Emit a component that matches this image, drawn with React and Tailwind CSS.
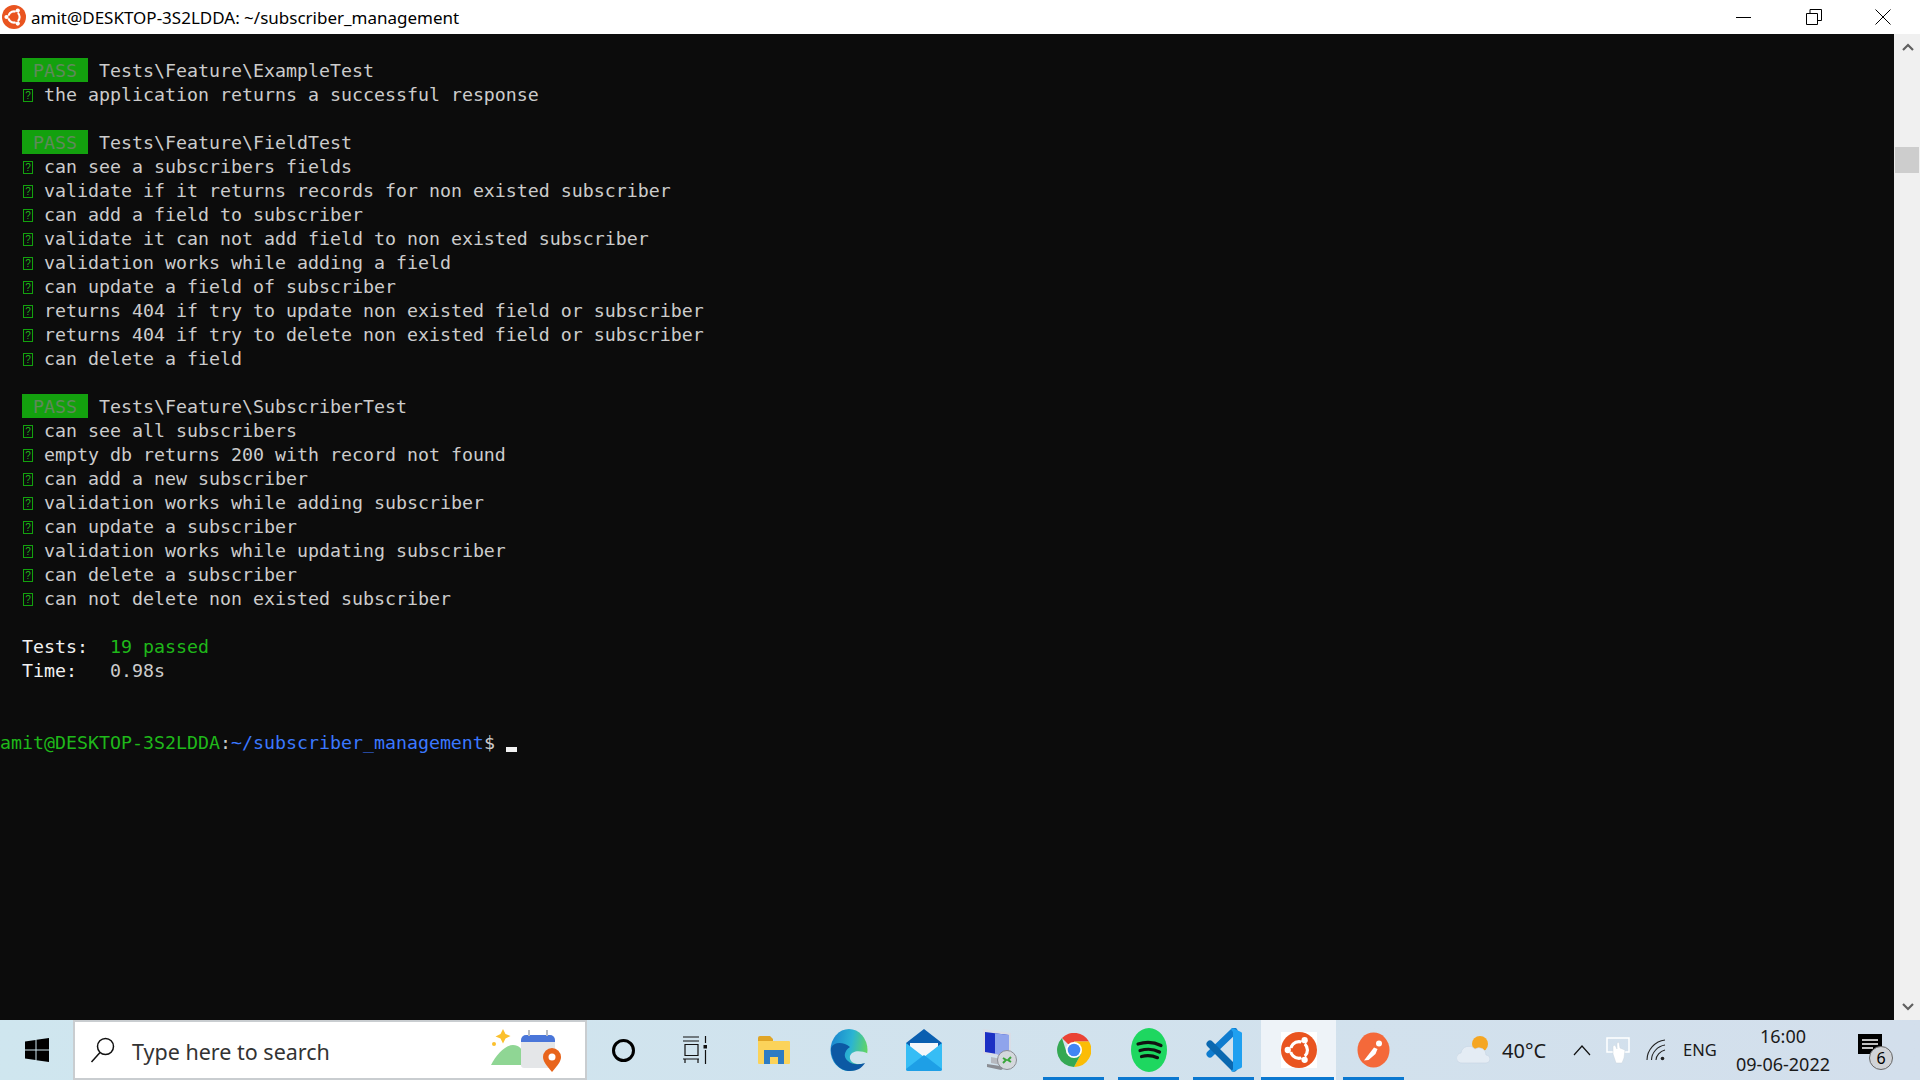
const fieldTests = [
  'can see a subscribers fields',
  'validate if it returns records for non existed subscriber',
  'can add a field to subscriber',
  'validate it can not add field to non existed subscriber',
  'validation works while adding a field',
  'can update a field of subscriber',
  'returns 404 if try to update non existed field or subscriber',
  'returns 404 if try to delete non existed field or subscriber',
  'can delete a field',
];

const subscriberTests = [
  'can see all subscribers',
  'empty db returns 200 with record not found',
  'can add a new subscriber',
  'validation works while adding subscriber',
  'can update a subscriber',
  'validation works while updating subscriber',
  'can delete a subscriber',
  'can not delete non existed subscriber',
];

function Row({ children }) {
  return <div className="h-6 leading-[26px] whitespace-pre">{children}</div>;
}

function Pass({ name }) {
  return (
    <Row>
      {'  '}
      <span className="inline-block h-6 align-top bg-[#13a10e] text-[#5f8a5b]"> PASS </span>
      {' '}
      <span>{name}</span>
    </Row>
  );
}

function Test({ name }) {
  return (
    <Row>
      {'  '}
      <span className="inline-block w-[11px] h-6 align-top relative">
        <span className="absolute left-px top-[7px] w-[10px] h-[13px] border border-[#13a10e] text-[#1fb81a] text-[10px] leading-[11px] text-center font-['Liberation_Sans',sans-serif]">?</span>
      </span>
      {' '}
      {name}
    </Row>
  );
}

function UbuntuLogo({ size = 26 }) {
  return (
    <svg width={size} height={size} viewBox="0 0 32 32">
      <circle cx="16" cy="16" r="16" fill="#e95420" />
      <circle cx="16" cy="16" r="7.500" fill="none" stroke="#fff" strokeWidth="2.800" />
      <g fill="#e95420">
        <rect x="3" y="14.400" width="8" height="3.200" />
        <rect x="3" y="14.400" width="8" height="3.200" transform="rotate(120 16 16)" />
        <rect x="3" y="14.400" width="8" height="3.200" transform="rotate(240 16 16)" />
      </g>
      <g fill="#fff">
        <circle cx="6" cy="16" r="2.800" />
        <circle cx="21" cy="7.300" r="2.800" />
        <circle cx="21" cy="24.700" r="2.800" />
      </g>
    </svg>
  );
}

function Slot({ children, underline, active }) {
  return (
    <div className={`relative w-[75px] flex items-center justify-center ${active ? 'bg-[#eef3f8]' : ''}`}>
      {children}
      {underline && <div className={`absolute bottom-0 h-[3px] bg-[#0b78d0] ${active ? 'left-0 right-[2px]' : 'left-[7px] w-[61px]'}`} />}
    </div>
  );
}

export default function App() {
  return (
    <div className="w-[1920px] h-[1080px] flex flex-col overflow-hidden bg-white font-['Noto_Sans',sans-serif]">
      {/* title bar */}
      <div className="h-[34px] flex items-center bg-white text-black">
        <div className="w-[31px] pl-[2px] flex items-center">
          <UbuntuLogo size={24} />
        </div>
        <div className="text-[17px] pt-[2px] whitespace-pre">amit@DESKTOP-3S2LDDA: ~/subscriber_management</div>
        <div className="ml-auto mr-[3px] flex items-center">
          <div className="w-[70px] flex justify-center">
            <svg width="16" height="16" viewBox="0 0 16 16"><path d="M0 8.500h15" stroke="#000" fill="none" /></svg>
          </div>
          <div className="w-[70px] flex justify-center">
            <svg width="16" height="16" viewBox="0 0 16 16" fill="none" stroke="#000"><path d="M.5 4.500h11v11H.5zM4 4.500V.5h11.500v11h-4" /></svg>
          </div>
          <div className="w-[68px] flex justify-center">
            <svg width="16" height="16" viewBox="0 0 16 16" fill="none" stroke="#000"><path d="M.5.5l15 15M15.500.5l-15 15" /></svg>
          </div>
        </div>
      </div>

      {/* terminal */}
      <div className="flex-1 flex min-h-0">
        <div className="flex-1 bg-[#0c0c0c] text-[#cccccc] text-[18.27px] font-['DejaVu_Sans_Mono',monospace]">
          <Row> </Row>
          <Pass name="Tests\Feature\ExampleTest" />
          <Test name="the application returns a successful response" />
          <Row> </Row>
          <Pass name="Tests\Feature\FieldTest" />
          {fieldTests.map((t) => <Test key={t} name={t} />)}
          <Row> </Row>
          <Pass name="Tests\Feature\SubscriberTest" />
          {subscriberTests.map((t) => <Test key={t} name={t} />)}
          <Row> </Row>
          <Row>
            <span className="text-[#f2f2f2]">{'  Tests:  '}</span>
            <span className="text-[#1fb81a]">19 passed</span>
          </Row>
          <Row>
            <span className="text-[#f2f2f2]">{'  Time:   '}</span>
            0.98s
          </Row>
          <Row> </Row>
          <Row> </Row>
          <Row>
            <span className="text-[#1fb81a]">amit@DESKTOP-3S2LDDA</span>
            :
            <span className="text-[#3b78ff]">~/subscriber_management</span>
            {'$ '}
            <span className="inline-block w-[11px] h-[5px] bg-[#f2f2f2] align-[-3px]" />
          </Row>
        </div>
        {/* scrollbar */}
        <div className="w-[26px] bg-[#f0f0f0] flex flex-col items-center pl-[1px] justify-between">
          <div className="w-full">
            <div className="h-[26px] flex items-center justify-center">
              <svg width="12" height="8" viewBox="0 0 12 8"><path d="M1 7l5-5 5 5" fill="none" stroke="#606060" strokeWidth="2.200" /></svg>
            </div>
            <div className="mt-[87px] h-[26px] w-[24px] bg-[#cdcdcd]" />
          </div>
          <div className="h-[26px] flex items-center justify-center">
            <svg width="12" height="8" viewBox="0 0 12 8"><path d="M1 1l5 5 5-5" fill="none" stroke="#606060" strokeWidth="2.200" /></svg>
          </div>
        </div>
      </div>

      {/* taskbar */}
      <div className="h-[60px] flex items-stretch bg-gradient-to-r from-[#cfe6ef] to-[#d3dfec] text-[#1a1a1a]">
        <div className="w-[73px] flex items-center justify-center">
          <svg width="24" height="24" viewBox="0 0 24 24" fill="#000">
            <path d="M0 3.500l10.500-1.500v9.500H0zM11.500 1.800L24 0v11.500H11.500zM0 12.500h10.500V22L0 20.500zM11.500 12.500H24V24l-12.500-1.800z" />
          </svg>
        </div>

        {/* search box */}
        <div className="w-[514px] bg-white border-2 border-[#c9cdd0] flex items-center">
          <svg className="ml-[15px]" width="26" height="28" viewBox="0 0 26 28" fill="none" stroke="#111" strokeWidth="1.500">
            <circle cx="15.500" cy="10.500" r="8" />
            <path d="M10 16.500L1.500 26" />
          </svg>
          <span className="ml-[16px] pt-[4px] text-[21.5px] text-[#333]">Type here to search</span>
          <svg className="ml-auto mr-[20px]" width="74" height="46" viewBox="0 0 74 46">
            <path d="M10 5l2.500 5 5 2-5 2.500-2.500 5-2.500-5-5-2 5-2.500z" transform="translate(2 -3)" fill="#fbc02d" />
            <circle cx="3" cy="17" r="2" fill="#fbc02d" />
            <path d="M0 38c5-10 14-20 22-20 6 0 9 4 10 8v12z" fill="#8fd694" />
            <rect x="30" y="13" width="34" height="28" rx="3" fill="#e4e6e8" />
            <path d="M30 13a5 5 0 0 1 5-5h24a5 5 0 0 1 5 5v2H30z" fill="#4a76d9" />
            <path d="M38 3v6M56 3v6" stroke="#b8bcc4" strokeWidth="2" />
            <path d="M61 45c-6-7-9-11-9-15a9 9 0 0 1 18 0c0 4-3 8-9 15z" fill="#e8641b" />
            <circle cx="61" cy="30" r="3.500" fill="#fff" />
          </svg>
        </div>

        {/* cortana, task view */}
        <div className="w-[72px] flex items-center justify-center">
          <div className="w-[23px] h-[23px] rounded-full border-[3px] border-black" />
        </div>
        <div className="w-[72px] flex items-center justify-center">
          <svg width="24" height="28" viewBox="0 0 24 28" fill="none" stroke="#111" strokeWidth="1.200">
            <path d="M0 1h16M0 5h16M2 8.500h13v11H2zM0 23h16M2 23v4M15 23v4M22.500 0v7M22.500 14v14" />
            <rect x="20.500" y="9" width="4" height="3.500" fill="#111" stroke="none" />
          </svg>
        </div>

        {/* pinned apps */}
        <div className="ml-[5px] flex items-stretch">
          <Slot>
            <svg width="34" height="30" viewBox="0 0 34 30">
              <path d="M1 3a2 2 0 0 1 2-2h10l3 3v4H1z" fill="#e0a526" />
              <path d="M1 6h31a1 1 0 0 1 1 1v21a1 1 0 0 1-1 1H2a1 1 0 0 1-1-1z" fill="#fbd35a" />
              <path d="M7 15h20v14h-6v-7h-8v7H7z" fill="#2d7cc4" />
            </svg>
          </Slot>
          <Slot>
            <svg width="38" height="44" viewBox="0 0 38 44">
              <defs>
                <linearGradient id="edgeTop" x1="0" y1="0.300" x2="1" y2="0.500">
                  <stop offset="0" stopColor="#1a86d0" />
                  <stop offset="0.550" stopColor="#2bb4d2" />
                  <stop offset="1" stopColor="#62d660" />
                </linearGradient>
              </defs>
              <ellipse cx="19" cy="22" rx="18.500" ry="21" fill="url(#edgeTop)" />
              <path d="M39 26C31 22 22 22 20 28c-1 5 4 9 11 8 3 0 6-2 8-4z" fill="#cfe4ee" />
              <path d="M1 20c0 13 8 23 19 23 7 0 12-3 15-8-6 2-13 2-17-2-5-4-4-10 2-14-6-5-16-6-19 1z" fill="#0c59a4" />
            </svg>
          </Slot>
          <Slot>
            <svg width="36" height="42" viewBox="0 0 36 42">
              <path d="M18 0l18 14v4H0v-4z" fill="#0a5fb0" />
              <path d="M4 14h28v4L18 28 4 18z" fill="#f4f7fa" />
              <path d="M0 14l18 14 18-14v26a2 2 0 0 1-2 2H2a2 2 0 0 1-2-2z" fill="#36bdf5" />
              <path d="M0 40a2 2 0 0 0 2 2h32a2 2 0 0 0 2-2L18 26 0 40z" fill="#1e9fe6" />
            </svg>
          </Slot>
          <Slot>
            <svg width="36" height="44" viewBox="0 0 36 44">
              <path d="M2 1l28 4v26L2 26z" fill="#d9dde6" />
              <path d="M4 4l24 3v21L4 24z" fill="#1c2fc4" />
              <path d="M14 5.300l14 1.700v21l-14-2z" fill="#8fa4ec" />
              <path d="M10 29l10 2v6l-10-2z" fill="#b6b9bf" />
              <path d="M6 36l20 3-6 3-14-3z" fill="#8a8d93" />
              <circle cx="26" cy="32" r="9.500" fill="#d4d8dc" stroke="#8a8d93" />
              <path d="M22 35l3-3-3-2M30 29l-3 3 3 2" fill="none" stroke="#3aa63a" strokeWidth="2" />
            </svg>
          </Slot>
          <Slot underline>
            <svg width="34" height="34" viewBox="0 0 34 34">
              <path d="M17 17L5 5a17 17 0 0 1 27 3.500H17z" fill="#ea4335" />
              <path d="M17 34A17 17 0 0 0 32 8.500H17L24 21z" fill="#fbbc05" />
              <path d="M5 5a17 17 0 0 0 12 29l7-13H10z" fill="#34a853" />
              <circle cx="17" cy="17" r="8" fill="#fff" />
              <circle cx="17" cy="17" r="6.300" fill="#4285f4" />
            </svg>
          </Slot>
          <Slot underline>
            <svg width="36" height="44" viewBox="0 0 36 44">
              <ellipse cx="18" cy="22" rx="18" ry="22" fill="#1ed760" />
              <path d="M7 16c8-2.500 16-2 23 1.500M9 22.500c7-2 14-1.500 19.500 1.500M10.500 28.500c6-1.500 11-1 16 1.200" fill="none" stroke="#111" strokeWidth="3.200" strokeLinecap="round" />
            </svg>
          </Slot>
          <Slot underline>
            <svg width="36" height="44" viewBox="0 0 36 44">
              <path d="M28 3L4 26" stroke="#0f7ccf" strokeWidth="7" strokeLinecap="round" fill="none" />
              <path d="M4 16l24 24" stroke="#0a68b0" strokeWidth="7" strokeLinecap="round" fill="none" />
              <path d="M25 1.500a2 2 0 0 1 2.500-1L35 4a2 2 0 0 1 1 2v32a2 2 0 0 1-1 2l-7.500 3.500a2 2 0 0 1-2.500-1l2-1V4z" fill="#1fa0f0" />
            </svg>
          </Slot>
          <Slot underline active>
            <div className="bg-white flex">
              <UbuntuLogo size={36} />
            </div>
          </Slot>
          <Slot underline>
            <svg width="33" height="36" viewBox="0 0 33 36">
              <ellipse cx="16.500" cy="18" rx="16" ry="17.500" fill="#f4693a" />
              <path d="M7 28.500l10-13 3.500 1.500-2 5-7 6z" fill="#fff" />
              <circle cx="22" cy="11.500" r="3" fill="#fff" />
            </svg>
          </Slot>
        </div>

        {/* tray */}
        <div className="ml-[46px] flex items-center">
          <svg width="33" height="30" viewBox="0 0 33 30">
            <circle cx="23" cy="9" r="8" fill="#f5a623" />
            <path d="M5 28a5 5 0 0 1-1-10 8 8 0 0 1 14-4 7 7 0 0 1 11 6 4 4 0 0 1 0 8z" fill="#e4ecf4" stroke="#c6d4e2" strokeWidth=".6" />
          </svg>
          <span className="ml-[12px] pt-[2px] text-[20px] w-[44px] whitespace-nowrap">40°C</span>
          <svg className="ml-[27px]" width="18" height="12" viewBox="0 0 18 12" fill="none" stroke="#111" strokeWidth="1.200">
            <path d="M1 11l8-9 8 9" />
          </svg>
          <svg className="ml-[15px]" width="24" height="28" viewBox="0 0 24 28">
            <path d="M1 2h22v14H1z" fill="none" stroke="#fff" strokeWidth="1.500" />
            <path d="M7 10l2-1 2 4V7l2-1 1 6 5 2-1 8-2 5H10l-3-9z" fill="#fff" stroke="#c9d4de" strokeWidth=".5" />
          </svg>
          <svg className="ml-[16px]" width="20" height="22" viewBox="0 0 20 22" fill="none" stroke="#222" strokeWidth="1.100">
            <path d="M1 21C1 11 9 2 19 1M5.500 21c0-7 6-14 13.500-15M10 21c0-4 4-9 9-10" />
            <circle cx="16.500" cy="19.500" r="1.800" fill="#222" stroke="none" />
          </svg>
          <span className="ml-[17px] w-[34px] text-[16.5px] whitespace-nowrap">ENG</span>
          <div className="ml-[19px] w-[94px] flex flex-col items-center text-[18px] leading-[28px] whitespace-nowrap">
            <span>16:00</span>
            <span>09-06-2022</span>
          </div>
          <div className="ml-[28px] relative w-[24px] h-[28px] -mt-[4px]">
            <svg width="24" height="30" viewBox="0 0 24 30">
              <path d="M0 0h24v20h-6l-5 7-1-7H0z" fill="#000" />
              <path d="M4 6h16M4 10h16M4 14h11" stroke="#fff" strokeWidth="1.300" />
            </svg>
            <div className="absolute left-[11px] top-[12px] w-[24px] h-[24px] rounded-full bg-[#d0d3d7] border border-[#666] flex items-center justify-center text-[16px] text-black">6</div>
          </div>
        </div>
      </div>
    </div>
  );
}
